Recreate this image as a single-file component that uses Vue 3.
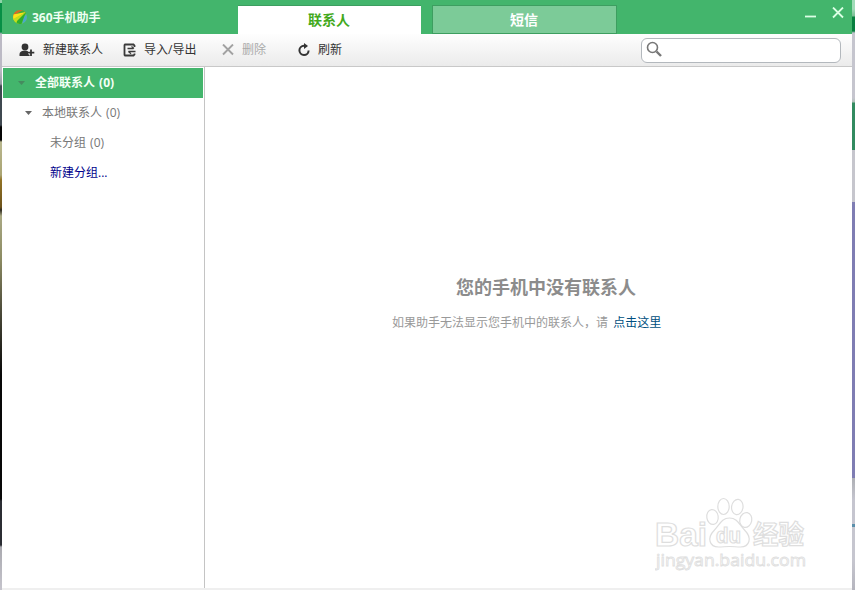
<template>
  <div class="desktop">
    <div class="desk-left"></div>
    <div class="window">
      <header class="title-bar">
        <div class="brand">
          <svg class="logo" viewBox="0 0 16 16">
            <defs>
              <clipPath id="ball"><circle cx="9" cy="8" r="7" /></clipPath>
            </defs>
            <g clip-path="url(#ball)">
              <rect width="16" height="16" fill="#6cc52c" />
              <path d="M0 0h12l4 3L2 9z" fill="#d8682a" />
              <path d="M5 5l7-4 4 3-5 2z" fill="#3fae3a" />
              <path d="M0 6l15-3L2 11z" fill="#ffe11a" />
              <path d="M16 4v12h-5l1-7z" fill="#4ba9c9" />
              <path d="M15 3L2 10l2 5 3 1z" fill="#c4dd1c" />
              <path d="M15 3L6 12l-1 4h5z" fill="#2fae2c" />
            </g>
          </svg>
          <span class="brand-name">360手机助手</span>
        </div>
        <nav class="tabs">
          <a
            v-for="tab in tabs"
            :key="tab"
            class="tab"
            :class="{ active: tab === current }"
            @click="current = tab"
          >{{ tab }}</a>
        </nav>
        <div class="controls">
          <svg class="minimize" viewBox="0 0 12 12"><path d="M0 9.500h11" /></svg>
          <svg class="close" viewBox="0 0 12 12"><path d="M1 0.500l10 10M11 0.500L1 10.500" /></svg>
        </div>
      </header>

      <div class="toolbar">
        <button class="tool add">
          <svg width="16" height="14" viewBox="0 0 16 14">
            <circle cx="6" cy="4" r="3.400" fill="#333" />
            <path d="M0.500 13v-2c0-2 2-3 4-3.200h3l2.500 1v2.200h1v2z" fill="#333" />
            <path d="M12 6v6.500M9 9.500h6.500" stroke="#f6f6f6" stroke-width="3.400" />
            <path d="M12 6.500v6.500M8.800 9.700h6.500" stroke="#333" stroke-width="1.800" />
          </svg>
          <span>新建联系人</span>
        </button>
        <button class="tool transfer">
          <svg width="13" height="14" viewBox="0 0 13 14" fill="none" stroke="#3a3a3a">
            <path d="M11.500 4V2.500L10.500 1.500H2L1.500 2V12L2 12.500H10.500L11.500 11.500V10.500" stroke-width="1.800" />
            <path d="M4.500 5.500H10.500M5.500 8.500H12.500" stroke-width="1.300" />
            <path d="M8.500 3.500l2.500 2M8 10.700l-2.500-2.200" stroke-width="1.200" />
          </svg>
          <span>导入/导出</span>
        </button>
        <button class="tool remove" disabled>
          <svg width="12" height="12" viewBox="0 0 12 12" fill="none" stroke="#a2a2a2" stroke-width="1.900">
            <path d="M1 0.500l10 10M11 0.500L1 10.500" />
          </svg>
          <span>删除</span>
        </button>
        <button class="tool refresh">
          <svg width="13" height="14" viewBox="0 0 13 14">
            <path d="M6.500 2.800H6A4.600 4.600 0 1 0 10.600 7.500" fill="none" stroke="#333" stroke-width="2" />
            <path d="M6 0v6L10 3z" fill="#333" />
          </svg>
          <span>刷新</span>
        </button>
        <label class="search">
          <svg width="17" height="17" viewBox="0 0 17 17" fill="none" stroke="#777">
            <circle cx="6.500" cy="6.500" r="5" stroke-width="1.600" />
            <path d="M10.500 10.500l4.500 4.500" stroke-width="2.400" />
          </svg>
          <input v-model="keyword" type="text" />
        </label>
      </div>

      <div class="body">
        <aside class="sidebar">
          <div
            v-for="item in groups"
            :key="item.name"
            class="group-row"
            :class="item.type"
          >
            <svg v-if="item.arrow" class="arrow" viewBox="0 0 7 4"><path d="M0 0h7L3.500 4z" /></svg>
            <span>{{ item.name }}</span>
          </div>
        </aside>
        <main class="content">
          <div class="empty">
            <h2>您的手机中没有联系人</h2>
            <p>如果助手无法显示您手机中的联系人，请 <a>点击这里</a></p>
          </div>
          <!-- 水印 -->
          <svg class="watermark" width="156" height="80" viewBox="0 0 156 80">
            <g class="wm-shape">
              <text class="wm-latin" x="0" y="49" textLength="52" lengthAdjust="spacingAndGlyphs">Bai</text>
              <ellipse cx="57.500" cy="20" rx="5.700" ry="7.500" transform="rotate(-8 57.500 20)" />
              <ellipse cx="68.500" cy="9.500" rx="5.700" ry="8" />
              <ellipse cx="82.300" cy="10" rx="5.700" ry="7.700" transform="rotate(8 82.300 10)" />
              <ellipse cx="90.800" cy="23" rx="6" ry="7.500" transform="rotate(12 90.800 23)" />
              <path d="M74.500 21c8 0 10 7 15 12 8 8 5 17-4 17-4 0-7-0.500-11-0.500s-7 0.500-11 0.500c-9 0-12-9-4-17 5-5 7-12 15-12z" />
              <text class="wm-du" x="61" y="46" textLength="25" lengthAdjust="spacingAndGlyphs">du</text>
              <text class="wm-cn" x="98" y="47" textLength="51" lengthAdjust="spacingAndGlyphs">经验</text>
            </g>
            <text class="wm-url" x="1" y="68.500" textLength="150" lengthAdjust="spacingAndGlyphs">jingyan.baidu.com</text>
          </svg>
        </main>
      </div>
      <div class="bottom-edge"></div>
    </div>
    <div class="desk-right"></div>
  </div>
</template>

<script setup>
import { ref } from 'vue'

const tabs = ['联系人', '短信']
const current = ref('联系人')
const keyword = ref('')

const groups = [
  { name: '全部联系人 (0)', type: 'all', arrow: true },
  { name: '本地联系人 (0)', type: 'local', arrow: true },
  { name: '未分组 (0)', type: 'child' },
  { name: '新建分组...', type: 'create' }
]
</script>

<style>
body {
  margin: 0;
  overflow: hidden;
}
</style>

<style scoped>
.desktop {
  display: flex;
  width: 855px;
  height: 590px;
  font-family: 'Open Sans', 'Noto Sans CJK SC', sans-serif;
  font-size: 12px;
  color: #333;
}

/* 窗口两侧露出的桌面 */
.desk-left {
  width: 2px;
  background: linear-gradient(
    #8fd3a9 0 3px, #078f45 3px 32px, #bcbac5 34px 70px, #929aa0 84px, #3f4850 86px 125px,
    #050505 127px 140px, #b9b78f 142px, #aaa473 175px, #927326 180px, #6d531b 207px,
    #302c21 210px, #aaa984 216px, #8b8a62 260px, #4e4c3b 310px, #080808 375px 499px,
    #2b2d33 501px 545px, #aaaab0 547px, #c5c4cc 590px
  );
}

.desk-right {
  width: 3px;
  background: linear-gradient(
    #a0dcb8 0 9px, #79bd94 16px, #087f3f 17px 31px, #c5c5ce 33px 98px, #afc0b8 102px,
    #328b60 103px 150px, #c6c6cd 150px 202px, #7f7db3 202px 478px, #aeb0b5 478px,
    #c5c5cf 500px 524px, #5a8fab 524px 527px, #c6c6cf 527px 560px, #b5b5be 590px
  );
}

.window {
  flex: 1;
  min-width: 0;
  display: flex;
  flex-direction: column;
  background: #fff;
}

.title-bar {
  display: flex;
  flex: 0 0 34px;
  background: #43b56c;
}

.brand {
  display: flex;
  align-items: center;
  width: 226px;
  padding-left: 9px;
  gap: 5px;
}

.logo {
  width: 16px;
  height: 16px;
}

.brand-name {
  padding-top: 2px;
  color: #effff3;
  font-weight: bold;
  line-height: 32px;
}

.tabs {
  display: flex;
  align-items: flex-start;
  gap: 11px;
  margin-left: 1px;
  padding-top: 5px;
}

.tab {
  box-sizing: border-box;
  width: 185px;
  height: 29px;
  padding-right: 1px;
  border: 1px solid #3d9e60;
  background: #7ccb98;
  color: #fff;
  font-size: 14px;
  font-weight: bold;
  line-height: 28px;
  text-align: center;
}

.tab.active {
  width: 183px;
  border-width: 1px 0 0;
  background: #fff;
  color: #43a91c;
}

.controls {
  display: flex;
  align-items: flex-start;
  gap: 15px;
  margin-left: auto;
  padding: 7px 8px 0 0;
}

.controls svg {
  width: 12px;
  height: 12px;
  fill: none;
  stroke: #dcffe5;
  stroke-width: 1.8;
}

.toolbar {
  display: flex;
  align-items: center;
  flex: 0 0 32px;
  padding: 0 11px 0 17px;
  border-bottom: 1px solid #c8c8c8;
  background: linear-gradient(#fefefe, #ebebeb);
}

.tool {
  display: flex;
  align-items: center;
  padding: 0;
  border: 0;
  background: none;
  color: #333;
  font: inherit;
  line-height: 30px;
}

.add {
  gap: 8px;
  width: 104px;
}

.transfer {
  gap: 8px;
  width: 99px;
}

.remove {
  gap: 8px;
  width: 76px;
  color: #aaa;
}

.refresh {
  gap: 7px;
}

.search {
  box-sizing: border-box;
  display: flex;
  align-items: center;
  width: 200px;
  height: 25px;
  margin-left: auto;
  padding-left: 4px;
  border: 1px solid #b3b8bd;
  border-radius: 6px;
  background: #fff;
}

.search svg {
  margin-top: -2px;
}

.search input {
  flex: 1;
  min-width: 0;
  border: 0;
  outline: 0;
  background: none;
}

.body {
  display: flex;
  flex: 1;
  min-height: 0;
}

.sidebar {
  width: 201px;
  padding: 1px 0 0 1px;
  border-right: 1px solid #c4c4c4;
}

.group-row {
  display: flex;
  align-items: center;
  height: 30px;
  margin-right: 1px;
  color: #777;
  line-height: 28px;
  word-spacing: 1px;
}

.arrow {
  width: 7px;
  height: 4px;
  fill: #666;
}

.all {
  gap: 10px;
  padding-left: 15px;
  background: #43b56c;
  color: #f4fff6;
  font-weight: bold;
}

.all .arrow {
  fill: #458b5f;
}

.local {
  gap: 10px;
  padding-left: 22px;
}

.child {
  padding-left: 47px;
}

.create {
  padding-left: 47px;
  color: #00008b;
}

.content {
  position: relative;
  flex: 1;
}

.empty {
  width: 270px;
  margin: 204px 0 0 187px;
  white-space: nowrap;
}

.empty h2 {
  margin: 0 0 0 64px;
  color: #8c8c8c;
  font-size: 18px;
  font-weight: bold;
  line-height: 32px;
}

.empty p {
  margin: 10px 0 0;
  color: #999;
  line-height: 20px;
  word-spacing: 2px;
}

.empty a {
  color: #004f80;
}

.watermark {
  position: absolute;
  left: 450px;
  top: 430px;
}

.wm-shape {
  fill: #fff;
  stroke: #dedede;
  stroke-width: 1.2;
}

.wm-latin {
  font: bold 33px 'Liberation Sans', sans-serif;
}

.wm-du {
  font: bold 22px 'Liberation Sans', sans-serif;
}

.wm-cn {
  font: bold 26px 'Noto Sans CJK SC', sans-serif;
}

.wm-url {
  font: 17px 'Open Sans', sans-serif;
  fill: #fff;
  stroke: #dfdfdf;
  stroke-width: 0.9;
}

.bottom-edge {
  flex: 0 0 2px;
  background: #efefef;
}
</style>
